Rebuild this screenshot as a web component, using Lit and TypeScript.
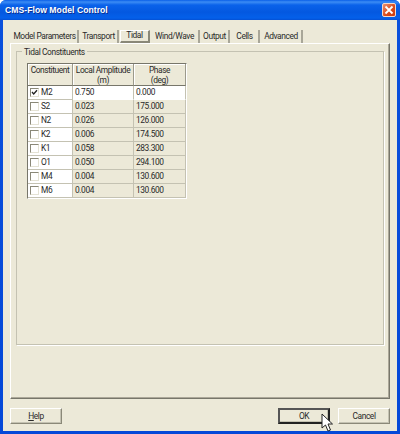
import { LitElement, html, css, svg } from "lit";
import { customElement } from "lit/decorators.js";

const rows = [
  ["M2", "0.750", "0.000"],
  ["S2", "0.023", "175.000"],
  ["N2", "0.026", "126.000"],
  ["K2", "0.006", "174.500"],
  ["K1", "0.058", "283.300"],
  ["O1", "0.050", "294.100"],
  ["M4", "0.004", "130.600"],
  ["M6", "0.004", "130.600"],
];
const tabs = [
  ["Model Parameters", 67],
  ["Transport", 39],
  ["Tidal", 30],
  ["Wind/Wave", 49],
  ["Output", 29],
  ["Cells", 29],
  ["Advanced", 42],
] as const;

@customElement("app-root")
export class AppRoot extends LitElement {
  static styles = css`
    :host { display: block; width: 400px; height: 434px; font-family: Roboto, "Liberation Sans", sans-serif; font-size: 8.4px; letter-spacing: -0.4px; color: #2a2a2a; overflow: hidden; position: relative; }
    * { box-sizing: border-box; }
    .win { width: 400px; height: 434px; display: flex; flex-direction: column; padding: 0 3px 3px; border-radius: 6px 6px 0 0;
      background: linear-gradient(180deg, #0a5ae8 0, #0a50dc 20px, #0548d8 100%); }
    .title { height: 20px; margin: 0 -3px; padding: 0 4px 0 5px; display: flex; align-items: center; justify-content: space-between; border-radius: 6px 6px 0 0;
      background: linear-gradient(180deg, #0a5fe8 0, #3c8cf4 2px, #0a62ea 5px, #0458e0 12px, #0460ea 18px, #0450d4 20px); }
    .title span { color: #fff; font-family: "Liberation Sans", sans-serif; font-weight: bold; font-size: 8.6px; text-shadow: 1px 1px 0 #0b2e90; letter-spacing: 0.05px; }
    .close { width: 14px; height: 14px; border: 1px solid #f4d8c8; border-radius: 2px; background: linear-gradient(135deg, #ea9070, #d84818 60%, #c83c10); display: flex; align-items: center; justify-content: center; }
    .client { flex: 1; background: #ece9d8; padding: 10px 7px 0; display: flex; flex-direction: column; }
    .tabs { display: flex; height: 13px; padding-left: 2px; gap: 1px; }
    .tab { height: 13px; line-height: 13px; text-align: center; border-right: 2px solid #a8a698; white-space: nowrap; }
    .tab.sel { border: 1px solid #8a8878; border-right: 2px solid #8a8878; border-bottom: 2px solid #8a8878; border-top-color: #fff; border-left-color: #fff; line-height: 9px; background: #ece9d8; }
    .panel { height: 356px; border: 1px solid; border-color: #fff #77766a #77766a #fff; padding: 7px 5px 0 5px; box-shadow: inset -1px -1px 0 #aca899; }
    .group { position: relative; height: 294px; border: 1px solid #c4c2b2; padding: 11px 0 0 10px; box-shadow: 1px 1px 0 #fff; }
    .legend { position: absolute; left: 5px; top: -6px; background: #ece9d8; padding: 0 2px; line-height: 12px; }
    .grid { display: grid; grid-template-columns: 45px 61px 52px; width: 160px; border: 1px solid; border-color: #77766a #fff #fff #77766a; }
    .h { height: 22px; text-align: center; line-height: 10px; padding-top: 1px; border-right: 1px solid #9c9a8c; border-bottom: 1px solid #77766a; box-shadow: inset 1px 1px 0 #fff; white-space: nowrap; }
    .c { height: 14px; line-height: 13px; padding-left: 2px; border-right: 1px solid #c4c2b2; border-bottom: 1px solid #c4c2b2; }
    .c.name { background: #fff; display: flex; align-items: center; gap: 2px; padding-left: 2px; }
    .c.sel { background: #fff; border-bottom-color: #fff; }
    .box { width: 9px; height: 9px; border: 1px solid #8a8878; border-right-color: #e4e2d4; border-bottom-color: #e4e2d4; background: #fff; display: flex; }
    .footer { flex: 1; display: flex; align-items: flex-start; padding-top: 9px; }
    .btn { height: 16px; line-height: 14px; text-align: center; border: 1px solid; border-color: #fff #8a8878 #8a8878 #fff; box-shadow: inset -1px -1px 0 #c4c2b2; background: #ece9d8; }
    .help { width: 52px; }
    .spacer { flex: 1; }
    .ok { width: 52px; margin-right: 8px; border: 2px solid; border-color: #555 #222 #222 #555; line-height: 12px; }
    .cancel { width: 52px; }
    .cursor { position: absolute; left: 321px; top: 413px; width: 12px; height: 19px; }
  `;

  render() {
    return html`<div class="win">
      <div class="title"><span>CMS-Flow Model Control</span>
        <div class="close"><svg width="10" height="10" viewBox="0 0 10 10"><path d="M1.5 1.5L8.5 8.5M8.5 1.5L1.5 8.5" stroke="#fff" stroke-width="1.8"/></svg></div>
      </div>
      <div class="client">
        <div class="tabs">
          ${tabs.map(([t, w]) => html`<div class="tab ${t === "Tidal" ? "sel" : ""}" style="width:${w}px">${t}</div>`)}
        </div>
        <div class="panel">
          <div class="group">
            <div class="legend">Tidal Constituents</div>
            <div class="grid">
              <div class="h">Constituent</div>
              <div class="h">Local Amplitude<br />(m)</div>
              <div class="h">Phase<br />(deg)</div>
              ${rows.map(
                (r, i) => html`
                  <div class="c name"><div class="box">${i === 0
                    ? html`<svg width="7" height="7" viewBox="0 0 7 7">${svg`<path d="M1 3L2.7 5L6 1.2" fill="none" stroke="#222" stroke-width="1.3"/>`}</svg>`
                    : ""}</div>${r[0]}</div>
                  <div class="c ${i === 0 ? "sel" : ""}">${r[1]}</div>
                  <div class="c ${i === 0 ? "sel" : ""}">${r[2]}</div>`
              )}
            </div>
          </div>
        </div>
        <div class="footer">
          <div class="btn help"><u>H</u>elp</div>
          <div class="spacer"></div>
          <div class="btn ok">OK</div>
          <div class="btn cancel">Cancel</div>
        </div>
      </div>
      <svg class="cursor" viewBox="0 0 12 19"><path d="M1 1V15L4.5 12L7 18L9.5 17L7 11H11.5Z" fill="#fff" stroke="#222" stroke-width="1"/></svg>
    </div>`;
  }
}
